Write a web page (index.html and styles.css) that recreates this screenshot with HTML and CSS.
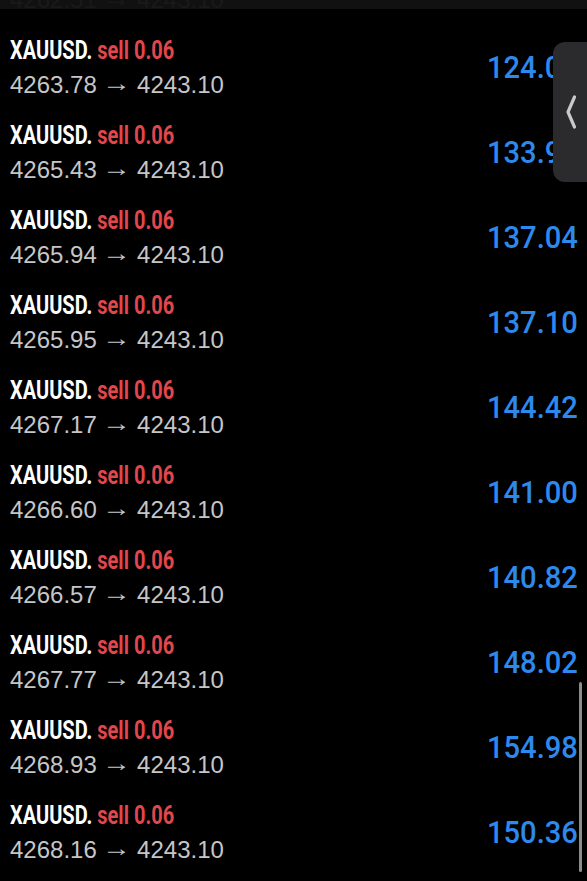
FILE: index.html
```html
<!DOCTYPE html>
<html lang="en">
<head>
    <meta charset="UTF-8">
    <meta name="viewport" content="width=device-width, initial-scale=1.0">
    <title>History</title>
    <link rel="stylesheet" href="styles.css">
</head>
<body>
    <div class="top-bar"></div>

    <div class="deals">
        <div class="deal">
            <div class="deal-info">
                <div class="deal-title"><span class="symbol">XAUUSD.</span> <span class="side">sell 0.06</span></div>
                <div class="deal-price">4262.51 <span class="arrow">&rarr;</span> 4243.10</div>
            </div>
            <div class="profit">116.46</div>
        </div>
        <div class="deal">
            <div class="deal-info">
                <div class="deal-title"><span class="symbol">XAUUSD.</span> <span class="side">sell 0.06</span></div>
                <div class="deal-price">4263.78 <span class="arrow">&rarr;</span> 4243.10</div>
            </div>
            <div class="profit">124.08</div>
        </div>
        <div class="deal">
            <div class="deal-info">
                <div class="deal-title"><span class="symbol">XAUUSD.</span> <span class="side">sell 0.06</span></div>
                <div class="deal-price">4265.43 <span class="arrow">&rarr;</span> 4243.10</div>
            </div>
            <div class="profit">133.98</div>
        </div>
        <div class="deal">
            <div class="deal-info">
                <div class="deal-title"><span class="symbol">XAUUSD.</span> <span class="side">sell 0.06</span></div>
                <div class="deal-price">4265.94 <span class="arrow">&rarr;</span> 4243.10</div>
            </div>
            <div class="profit">137.04</div>
        </div>
        <div class="deal">
            <div class="deal-info">
                <div class="deal-title"><span class="symbol">XAUUSD.</span> <span class="side">sell 0.06</span></div>
                <div class="deal-price">4265.95 <span class="arrow">&rarr;</span> 4243.10</div>
            </div>
            <div class="profit">137.10</div>
        </div>
        <div class="deal">
            <div class="deal-info">
                <div class="deal-title"><span class="symbol">XAUUSD.</span> <span class="side">sell 0.06</span></div>
                <div class="deal-price">4267.17 <span class="arrow">&rarr;</span> 4243.10</div>
            </div>
            <div class="profit">144.42</div>
        </div>
        <div class="deal">
            <div class="deal-info">
                <div class="deal-title"><span class="symbol">XAUUSD.</span> <span class="side">sell 0.06</span></div>
                <div class="deal-price">4266.60 <span class="arrow">&rarr;</span> 4243.10</div>
            </div>
            <div class="profit">141.00</div>
        </div>
        <div class="deal">
            <div class="deal-info">
                <div class="deal-title"><span class="symbol">XAUUSD.</span> <span class="side">sell 0.06</span></div>
                <div class="deal-price">4266.57 <span class="arrow">&rarr;</span> 4243.10</div>
            </div>
            <div class="profit">140.82</div>
        </div>
        <div class="deal">
            <div class="deal-info">
                <div class="deal-title"><span class="symbol">XAUUSD.</span> <span class="side">sell 0.06</span></div>
                <div class="deal-price">4267.77 <span class="arrow">&rarr;</span> 4243.10</div>
            </div>
            <div class="profit">148.02</div>
        </div>
        <div class="deal">
            <div class="deal-info">
                <div class="deal-title"><span class="symbol">XAUUSD.</span> <span class="side">sell 0.06</span></div>
                <div class="deal-price">4268.93 <span class="arrow">&rarr;</span> 4243.10</div>
            </div>
            <div class="profit">154.98</div>
        </div>
        <div class="deal">
            <div class="deal-info">
                <div class="deal-title"><span class="symbol">XAUUSD.</span> <span class="side">sell 0.06</span></div>
                <div class="deal-price">4268.16 <span class="arrow">&rarr;</span> 4243.10</div>
            </div>
            <div class="profit">150.36</div>
        </div>
    </div>

    <!-- side drawer handle -->
    <div class="drawer-handle">
        <svg width="14" height="36" viewBox="0 0 14 36">
            <path d="M10.5 3 L4 18 L10.5 33" fill="none" stroke="#c9c9cc" stroke-width="3.2" stroke-linecap="round" stroke-linejoin="round"/>
        </svg>
    </div>

    <div class="scrollbar"></div>
</body>
</html>
```

FILE: styles.css
```css
/* Page */
body {
    margin: 0;
    height: 881px;
    overflow: hidden;
    background: #000;
    color: #fff;
    font-family: 'Liberation Sans', Arial, sans-serif;
}

.top-bar {
    position: absolute;
    top: 0;
    left: 0;
    right: 0;
    height: 9px;
    background: rgba(18, 18, 18, 0.96);
    z-index: 2;
}

/* Deal list */
.deals {
    margin-top: -61px;
}

.deal {
    height: 85px;
    padding: 0 9px 0 10px;
    display: flex;
    justify-content: space-between;
    align-items: center;
}

.deal-info {
    display: flex;
    flex-direction: column;
    align-self: flex-start;
    padding-top: 13px;
}

.deal-title {
    font-family: Roboto, 'Liberation Sans', sans-serif;
    font-weight: bold;
    font-size: 25px;
    line-height: 28px;
    white-space: nowrap;
    transform: scaleX(0.8);
    transform-origin: left center;
}

.symbol {
    color: #fff;
}

.side {
    color: #e2474c;
}

.deal-price {
    font-size: 24px;
    line-height: 40px;
    color: #c6c6c8;
    white-space: nowrap;
}

.arrow {
    display: inline-block;
    width: 27px;
    text-align: center;
    transform: translateY(-2px) scaleX(1.2);
}

.profit {
    font-family: Roboto, 'Liberation Sans', sans-serif;
    font-weight: 500;
    font-size: 32px;
    color: #2e89ec;
    transform: scaleX(0.91);
    transform-origin: right center;
}

/* Overlays */
.drawer-handle {
    position: absolute;
    top: 42px;
    left: 553px;
    width: 40px;
    height: 140px;
    background: #2b2b2e;
    border-radius: 12px 0 0 12px;
    display: flex;
    align-items: center;
    padding-left: 11px;
    box-sizing: border-box;
}

.scrollbar {
    position: absolute;
    top: 682px;
    left: 579px;
    width: 3px;
    height: 190px;
    border-radius: 2px;
    background: #8c8c8e;
}
```
